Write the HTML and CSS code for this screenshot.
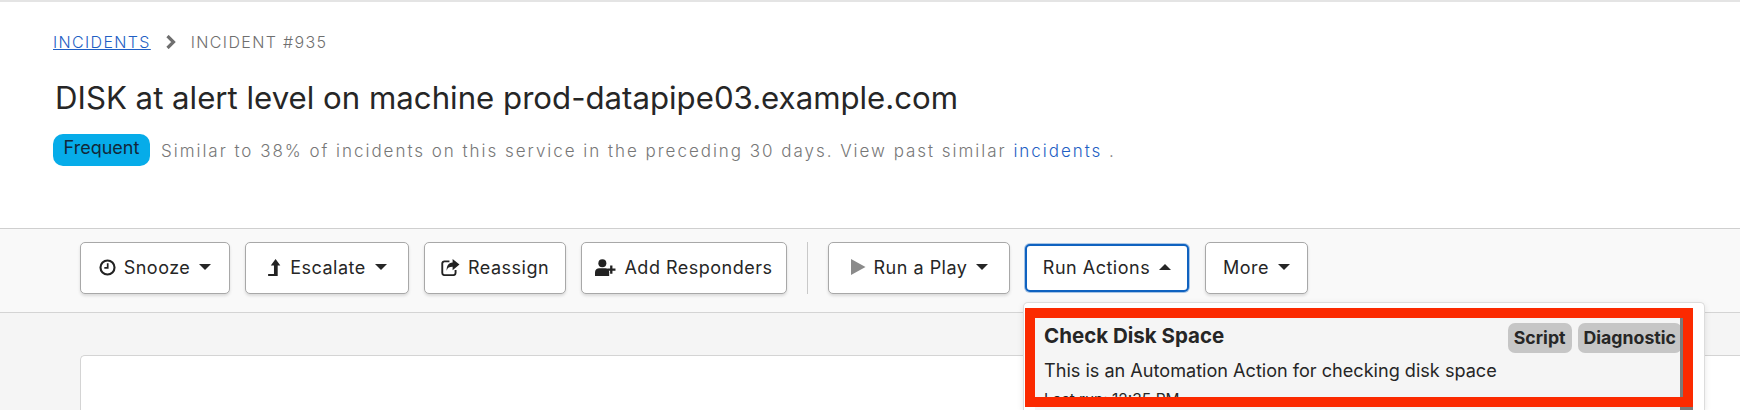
FILE: index.html
```html
<!DOCTYPE html>
<html lang="en">
<head>
<meta charset="utf-8">
<title>Incident #935</title>
<link rel="stylesheet" href="styles.css">
</head>
<body>
<header class="head">
  <nav class="crumbs">
    <a class="crumb-link" href="#">INCIDENTS</a>
    <svg class="crumb-sep" viewBox="0 0 10 14" width="10" height="14"><path d="M1.5 1 7.5 7 1.5 13" fill="none" stroke="#6f6f6f" stroke-width="3.2"/></svg>
    <span>INCIDENT #935</span>
  </nav>
  <h1 class="title">DISK at alert level on machine prod-datapipe03.example.com</h1>
  <div class="similar">
    <span class="badge">Frequent</span>
    <p class="similar-text">Similar to 38% of incidents on this service in the preceding 30 days. View past similar <a href="#">incidents</a> .</p>
  </div>
</header>
<div class="toolbar">
  <button class="btn btn-snooze"><svg class="ico" viewBox="0 0 16 16" width="17" height="17"><circle cx="8" cy="8" r="6.6" fill="none" stroke="#222" stroke-width="2"/><path d="M8.2 4v4.4H5" fill="none" stroke="#222" stroke-width="1.6"/></svg>Snooze<i class="caret"></i></button>
  <button class="btn btn-esc"><svg class="ico" viewBox="0 0 14 16" width="15" height="17"><path d="M8 0 12.5 6H10v10H1v-2H6.5V6H3.5z" fill="#222"/></svg>Escalate<i class="caret"></i></button>
  <button class="btn btn-re"><svg class="ico" viewBox="0 0 18 16" width="19" height="17"><path d="M11 0l6.5 5.2L11 10.5V7.4C8 7.4 6 8.4 5.4 11 5 7 7 3.4 11 3.2z" fill="#222"/><path d="M8 2.2H3.2A2 2 0 0 0 1.2 4.2v9a2 2 0 0 0 2 2h8.6a2 2 0 0 0 2-2v-2.8" fill="none" stroke="#222" stroke-width="1.8"/></svg>Reassign</button>
  <button class="btn btn-add"><svg class="ico" viewBox="0 0 20 16" width="21" height="17"><circle cx="7" cy="4" r="3.8" fill="#222"/><path d="M0 16v-3.5C0 10 2 8.6 4 8.6h6c2 0 3.5 1.4 3.5 3.9V16z" fill="#222"/><path d="M15.5 6v8M11.8 10h7.7" stroke="#222" stroke-width="2.2"/></svg>Add Responders</button>
  <span class="divider"></span>
  <button class="btn btn-play"><svg class="ico" viewBox="0 0 16 16" width="16" height="18"><path d="M1 0l14.5 8L1 16z" fill="#8a8a8a"/></svg>Run a Play<i class="caret"></i></button>
  <div class="menu-wrap">
    <button class="btn btn-run">Run Actions<i class="caret caret-up"></i></button>
    <div class="dropdown">
      <div class="action">
        <div class="action-top">
          <strong class="action-name">Check Disk Space</strong>
          <span class="chips"><span class="chip">Script</span><span class="chip">Diagnostic</span></span>
        </div>
        <p class="action-desc">This is an Automation Action for checking disk space</p>
        <p class="action-run">Last run: 12:35 PM</p>
      </div>
      <span class="thumb"></span>
      <span class="highlight"></span>
    </div>
  </div>
  <button class="btn btn-more">More<i class="caret"></i></button>
</div>
<main class="main"><div class="card"></div></main>
</body>
</html>
```
FILE: styles.css
```css
* { box-sizing: border-box; }
html, body { margin: 0; height: 410px; overflow: hidden; }
body { font-family: "Inter", "Liberation Sans", sans-serif; color: #262626; background: #f5f5f5; }

.head { height: 229px; background: #fff; border-top: 2px solid #e4e4e4; border-bottom: 1px solid #cfcfcf; padding: 29px 53px 0; }
.crumbs { display: flex; align-items: center; gap: 15px; font-size: 16px; letter-spacing: 1.35px; color: #6f6f6f; line-height: 22px; font-weight: 300; }
.crumb-link { color: #1f5fc4; }
.title { margin: 25px 0 0 2px; font-size: 31.2px; font-weight: 400; line-height: 40px; color: #262626; }
.similar { display: flex; align-items: flex-start; margin-top: 16px; }
.badge { width: 97px; height: 32px; border-radius: 10px; background: #06ace9; font-size: 18px; line-height: 28px; text-align: center; color: #12283a; }
.similar-text { margin: 6px 0 0 11px; font-size: 17px; line-height: 22px; letter-spacing: 1.97px; font-weight: 300; color: #777; }
.similar-text a { color: #1f5fc4; text-decoration: none; }

.toolbar { height: 84px; display: flex; align-items: flex-start; gap: 15px; padding: 13px 0 0 80px; background: #f9f9f9; border-bottom: 1px solid #d4d4d4; }
.btn { height: 52px; display: flex; align-items: center; justify-content: center; background: #fff; border: 1px solid #a8a8a8; border-radius: 5px; box-shadow: 0 2px 3px rgba(0,0,0,.12); font: 400 18px "Inter", sans-serif; letter-spacing: .5px; color: #262626; padding: 0 0 2px; }
.btn-snooze { width: 150px; }
.btn-esc { width: 164px; }
.btn-re { width: 142px; }
.btn-add { width: 206px; }
.btn-play { width: 182px; }
.btn-run { width: 164px; height: 48px; margin-top: 2px; border: 2px solid #0f62c0; box-shadow: 0 0 0 1px rgba(15,98,192,.35); }
.btn-more { width: 103px; margin-left: 1px; }
.ico { margin-right: 8px; flex: none; }
.caret { width: 0; height: 0; margin-left: 9px; border-left: 6.5px solid transparent; border-right: 6.5px solid transparent; border-top: 6px solid #262626; }
.caret-up { border-top: 0; border-bottom: 6px solid #262626; }
.divider { width: 1px; height: 52px; margin: 0 5px; background: #c9c9c9; }

.menu-wrap { position: relative; }
.dropdown { position: absolute; left: -2px; top: 60px; width: 682px; height: 108px; background: #fff; border: 1px solid #dcdcdc; border-bottom: 0; border-radius: 5px 5px 0 0; box-shadow: 0 2px 6px rgba(0,0,0,.1); z-index: 2; }
.action { position: absolute; left: 11px; top: 15px; width: 648px; height: 92px; background: #f5f5f5; padding: 0 0 0 9px; overflow: hidden; }
.thumb { position: absolute; left: 656px; top: 15px; width: 13px; height: 92px; background: #7a7a7a; }
.highlight { position: absolute; left: 1px; top: 5px; width: 668px; height: 99px; border: 10px solid #fb2a00; }
.action-top { display: flex; justify-content: space-between; align-items: flex-start; padding-top: 5px; }
.action-name { font-size: 20.5px; font-weight: 700; line-height: 26px; }
.chips { display: flex; gap: 6px; margin-right: 1px; }
.chip { height: 30px; background: #c6c6c6; border-radius: 7px; padding: 0 6px; font-size: 17.7px; font-weight: 700; line-height: 30px; }
.action-desc { margin: 5px 0 0; font-size: 18.1px; line-height: 24px; }
.action-run { margin: 7px 0 0; font-size: 15.5px; line-height: 22px; }

.main { height: 98px; padding: 42px 0 0 80px; }
.card { height: 56px; background: #fff; border: 1px solid #d4d4d4; border-bottom: 0; border-right: 0; border-radius: 5px 0 0 0; }
```
